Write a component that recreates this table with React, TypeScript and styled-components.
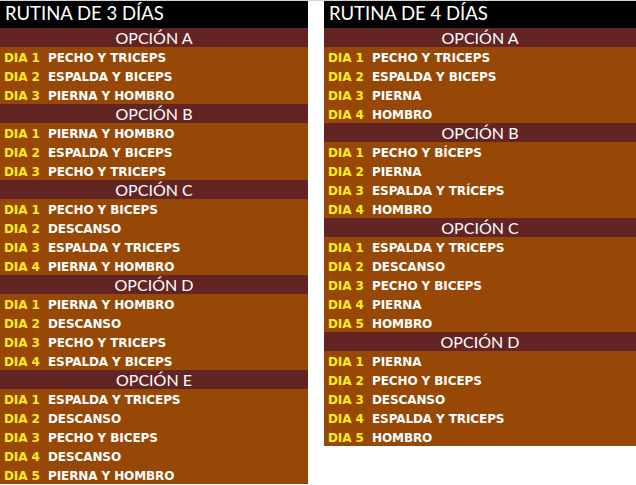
import styled, { createGlobalStyle } from "styled-components";

const GlobalStyle = createGlobalStyle`
  html, body {
    margin: 0;
    padding: 0;
    background: #ffffff;
  }
`;

const Page = styled.div`
  display: flex;
  align-items: flex-start;
  gap: 16px;
  width: 636px;
  height: 485px;
  border-top: 1px solid #d6d6d6;
  box-sizing: border-box;
  overflow: hidden;
`;

const Panel = styled.div<{ $width: number }>`
  width: ${(p) => p.$width}px;
  display: flex;
  flex-direction: column;
  background: #974806;
`;

const Title = styled.div`
  height: 27px;
  line-height: 25px;
  background: #000000;
  color: #ffffff;
  font-family: Lato, "Open Sans", sans-serif;
  font-size: 18.5px;
  padding-left: 5px;
  box-sizing: border-box;
`;

const OptionHeader = styled.div`
  height: 19px;
  line-height: 19px;
  background: #632523;
  color: #ffffff;
  text-align: center;
  font-family: Lato, "Open Sans", sans-serif;
  font-size: 16px;
`;

const Row = styled.div`
  display: flex;
  height: 19px;
  box-sizing: border-box;
  padding: 3px 0 0 4px;
  line-height: 17px;
  font-family: "DejaVu Sans", Verdana, sans-serif;
  font-weight: bold;
  font-size: 12px;
  letter-spacing: -0.1px;
  color: #ffffff;
`;

const DayLabel = styled.span`
  width: 44px;
  flex-shrink: 0;
  color: #ffec1a;
`;

const Task = styled.span`
  white-space: nowrap;
`;

interface Option {
  name: string;
  days: string[];
}

const threeDays: Option[] = [
  { name: "OPCIÓN A", days: ["PECHO Y TRICEPS", "ESPALDA Y BICEPS", "PIERNA Y HOMBRO"] },
  { name: "OPCIÓN B", days: ["PIERNA Y HOMBRO", "ESPALDA Y BICEPS", "PECHO Y TRICEPS"] },
  { name: "OPCIÓN C", days: ["PECHO Y BICEPS", "DESCANSO", "ESPALDA Y TRICEPS", "PIERNA Y HOMBRO"] },
  { name: "OPCIÓN D", days: ["PIERNA Y HOMBRO", "DESCANSO", "PECHO Y TRICEPS", "ESPALDA Y BICEPS"] },
  {
    name: "OPCIÓN E",
    days: ["ESPALDA Y TRICEPS", "DESCANSO", "PECHO Y BICEPS", "DESCANSO", "PIERNA Y HOMBRO"],
  },
];

const fourDays: Option[] = [
  { name: "OPCIÓN A", days: ["PECHO Y TRICEPS", "ESPALDA Y BICEPS", "PIERNA", "HOMBRO"] },
  { name: "OPCIÓN B", days: ["PECHO Y BÍCEPS", "PIERNA", "ESPALDA Y TRÍCEPS", "HOMBRO"] },
  {
    name: "OPCIÓN C",
    days: ["ESPALDA Y TRICEPS", "DESCANSO", "PECHO Y BICEPS", "PIERNA", "HOMBRO"],
  },
  {
    name: "OPCIÓN D",
    days: ["PIERNA", "PECHO Y BICEPS", "DESCANSO", "ESPALDA Y TRICEPS", "HOMBRO"],
  },
];

function Routine({ title, options, width }: { title: string; options: Option[]; width: number }) {
  return (
    <Panel $width={width}>
      <Title>{title}</Title>
      {options.map((opt) => (
        <div key={opt.name}>
          <OptionHeader>{opt.name}</OptionHeader>
          {opt.days.map((d, i) => (
            <Row key={i}>
              <DayLabel>DIA {i + 1}</DayLabel>
              <Task>{d}</Task>
            </Row>
          ))}
        </div>
      ))}
    </Panel>
  );
}

export default function App() {
  return (
    <>
      <GlobalStyle />
      <Page>
        <Routine title="RUTINA DE 3 DÍAS" options={threeDays} width={308} />
        <Routine title="RUTINA DE 4 DÍAS" options={fourDays} width={312} />
      </Page>
    </>
  );
}
